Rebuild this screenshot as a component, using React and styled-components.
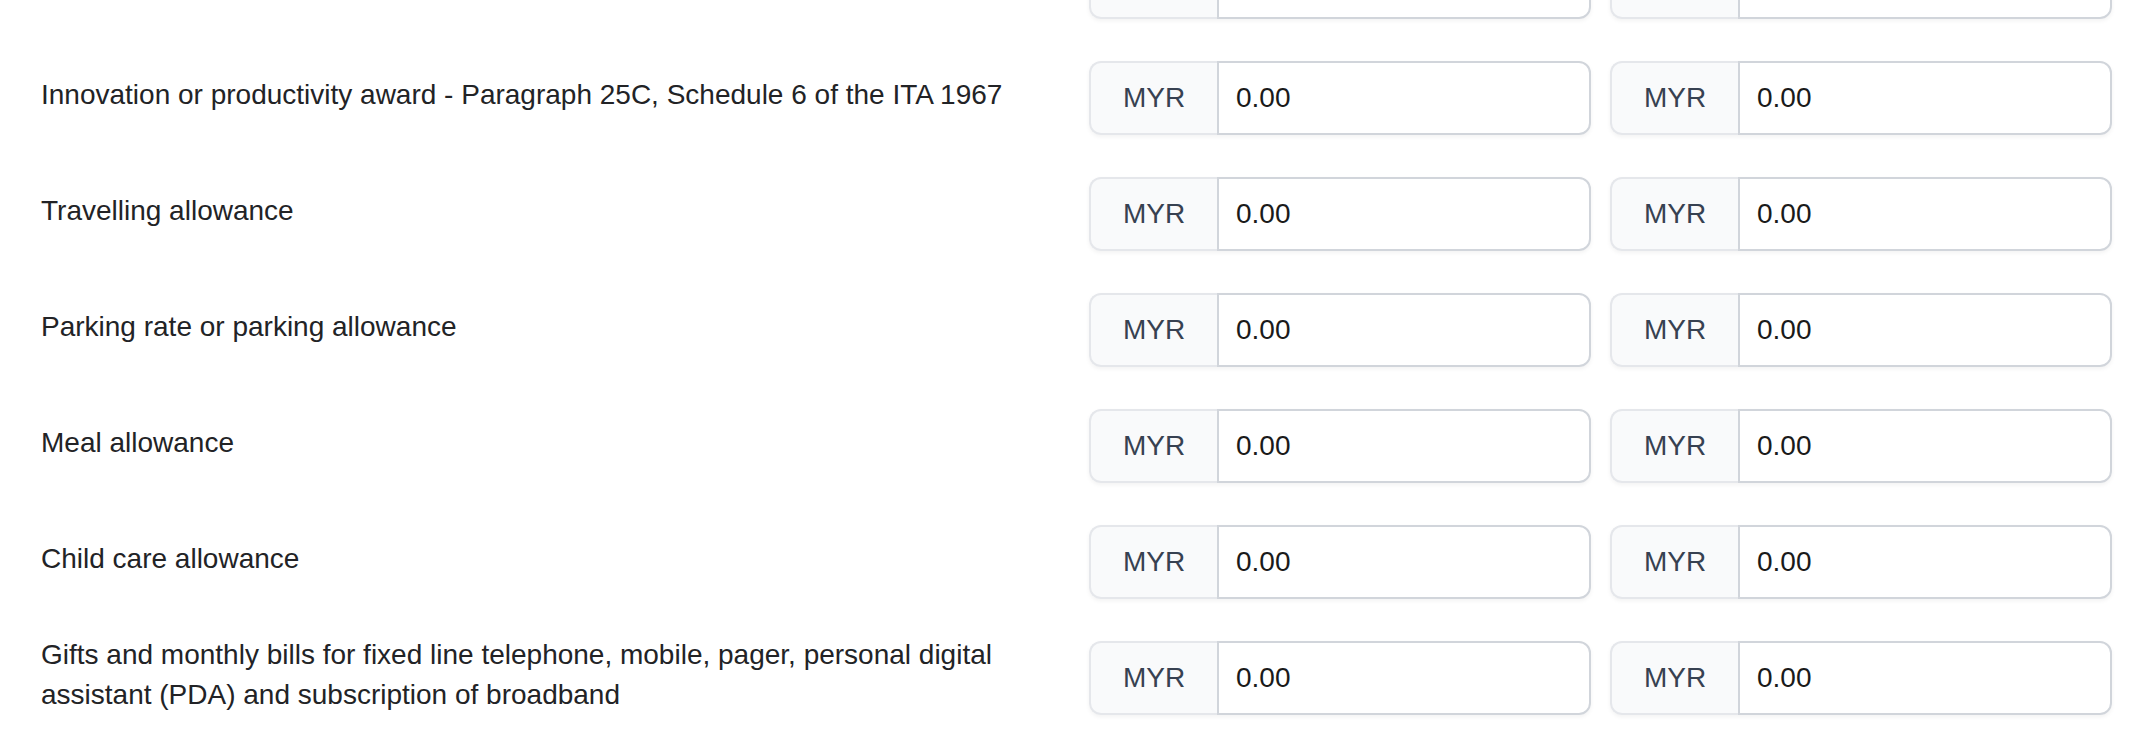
import styled, { createGlobalStyle } from "styled-components";

const GlobalStyle = createGlobalStyle`
  html, body {
    margin: 0;
    padding: 0;
    background: #ffffff;
    font-family: "Liberation Sans", Arial, Helvetica, sans-serif;
    overflow: hidden;
  }
`;

const Page = styled.div`
  padding: 0 34px 0 41px;
  height: 748px;
  overflow: hidden;
`;

const List = styled.div`
  display: flex;
  flex-direction: column;
  gap: 42px;
  margin-top: -55px;
`;

const Row = styled.div`
  display: grid;
  grid-template-columns: 1fr 502px 502px;
  column-gap: 19px;
  align-items: center;
`;

const Label = styled.div`
  font-size: 28px;
  line-height: 40px;
  color: #222326;
  margin-top: -7px;
  padding-right: 20px;
`;

const Group = styled.div`
  display: flex;
  height: 74px;
  border-radius: 12px;
  box-shadow: 0 2px 4px rgba(0, 0, 0, 0.05);
`;

const Prefix = styled.span`
  display: flex;
  align-items: center;
  justify-content: center;
  box-sizing: border-box;
  width: 128px;
  flex-shrink: 0;
  background: #f9fafb;
  border: 2px solid #e5e7eb;
  border-right: none;
  border-radius: 12px 0 0 12px;
  font-size: 28px;
  color: #374151;
`;

const Amount = styled.input`
  flex: 1;
  min-width: 0;
  box-sizing: border-box;
  height: 100%;
  margin: 0;
  padding: 0 17px;
  border: 2px solid #d1d5db;
  border-radius: 0 12px 12px 0;
  background: #ffffff;
  font-family: "Liberation Sans", Arial, Helvetica, sans-serif;
  font-size: 28px;
  color: #1a1a1a;
  outline: none;
`;

// first entry is the row scrolled mostly out of view above the fold
const rows = [
  "",
  "Innovation or productivity award - Paragraph 25C, Schedule 6 of the ITA 1967",
  "Travelling allowance",
  "Parking rate or parking allowance",
  "Meal allowance",
  "Child care allowance",
  "Gifts and monthly bills for fixed line telephone, mobile, pager, personal digital assistant (PDA) and subscription of broadband",
];

function MoneyField({ value }) {
  return (
    <Group>
      <Prefix>{value ? "MYR" : ""}</Prefix>
      <Amount type="text" defaultValue={value} />
    </Group>
  );
}

export default function App() {
  return (
    <>
      <GlobalStyle />
      <Page>
        <List>
          {rows.map((label, i) => (
            <Row key={i}>
              <Label>{label}</Label>
              <MoneyField value={label ? "0.00" : ""} />
              <MoneyField value={label ? "0.00" : ""} />
            </Row>
          ))}
        </List>
      </Page>
    </>
  );
}
